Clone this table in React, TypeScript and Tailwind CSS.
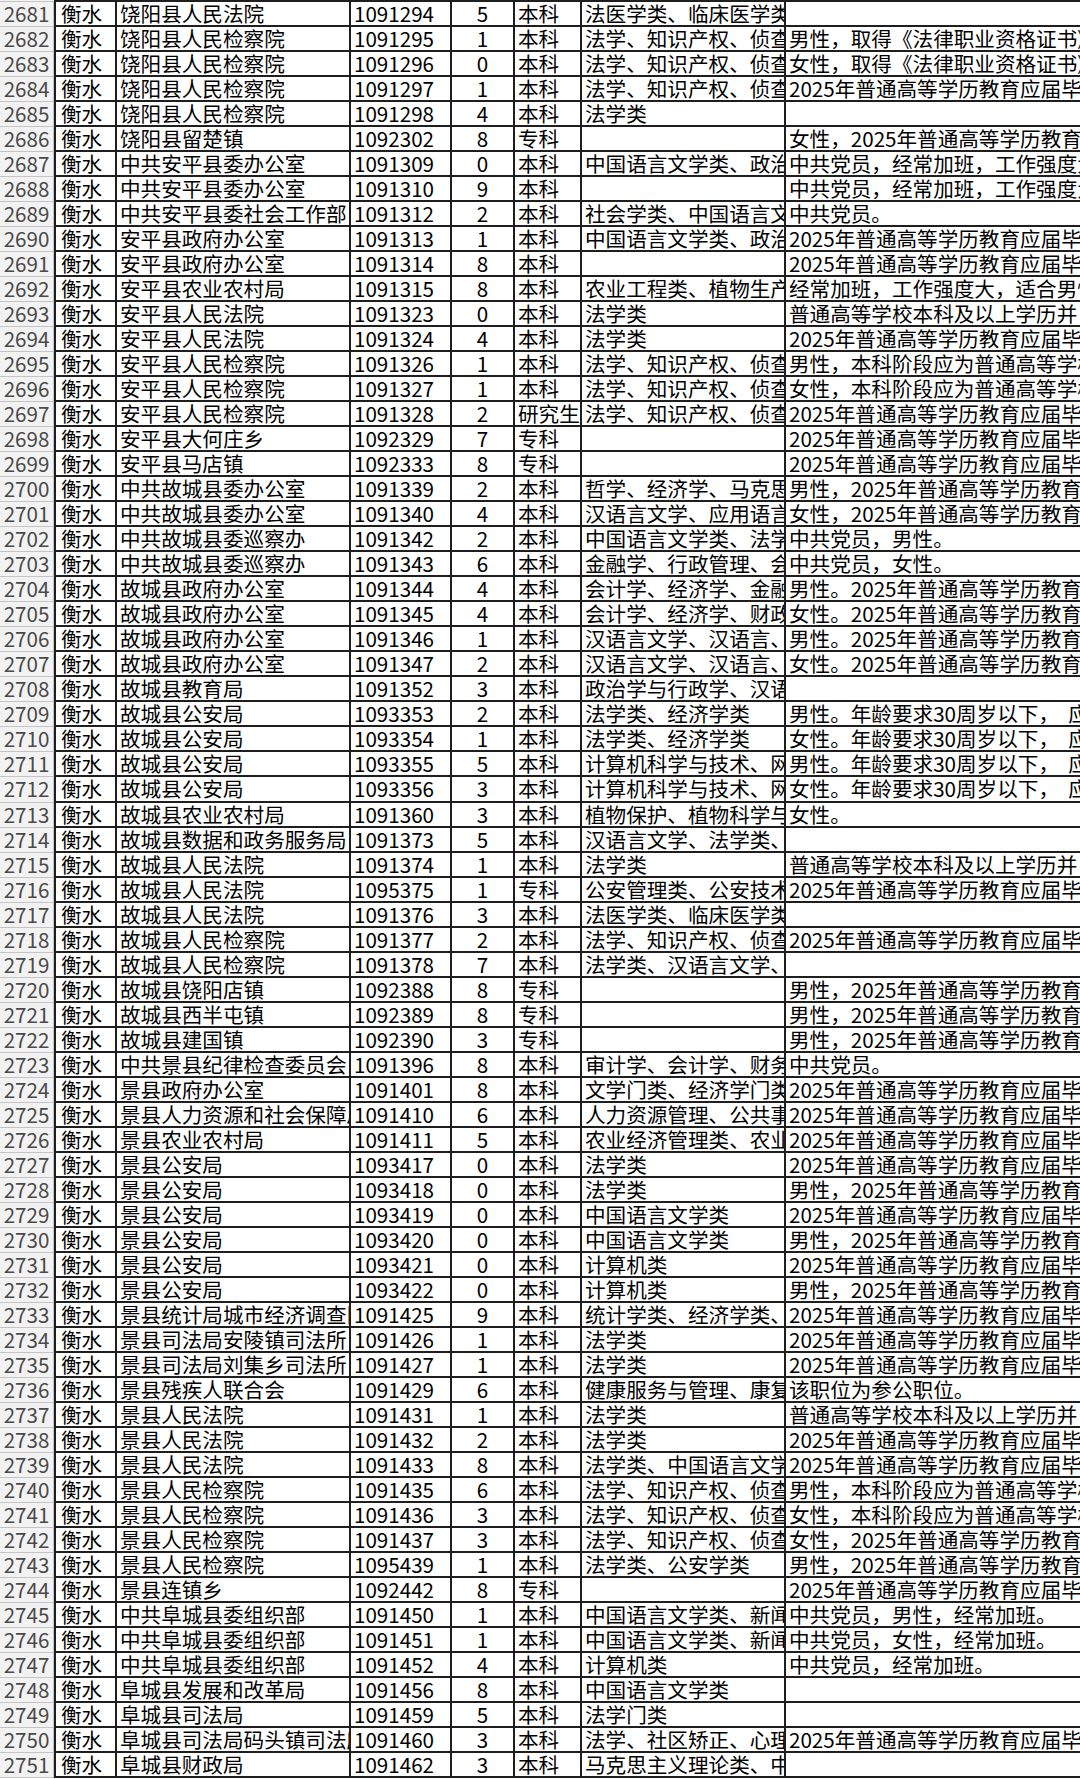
type Row = [number, string, string, string, string, string, string];

// [序号, 单位, 代码, 人数, 学历, 专业, 备注]
const rows: Row[] = [
  [2681, "饶阳县人民法院", "1091294", "5", "本科", "法医学类、临床医学类", ""],
  [2682, "饶阳县人民检察院", "1091295", "1", "本科", "法学、知识产权、侦查学", "男性，取得《法律职业资格证书》"],
  [2683, "饶阳县人民检察院", "1091296", "0", "本科", "法学、知识产权、侦查学", "女性，取得《法律职业资格证书》"],
  [2684, "饶阳县人民检察院", "1091297", "1", "本科", "法学、知识产权、侦查学", "2025年普通高等学历教育应届毕业生"],
  [2685, "饶阳县人民检察院", "1091298", "4", "本科", "法学类", ""],
  [2686, "饶阳县留楚镇", "1092302", "8", "专科", "", "女性，2025年普通高等学历教育应届毕业生"],
  [2687, "中共安平县委办公室", "1091309", "0", "本科", "中国语言文学类、政治学类", "中共党员，经常加班，工作强度大"],
  [2688, "中共安平县委办公室", "1091310", "9", "本科", "", "中共党员，经常加班，工作强度大"],
  [2689, "中共安平县委社会工作部", "1091312", "2", "本科", "社会学类、中国语言文学类", "中共党员。"],
  [2690, "安平县政府办公室", "1091313", "1", "本科", "中国语言文学类、政治学类", "2025年普通高等学历教育应届毕业生"],
  [2691, "安平县政府办公室", "1091314", "8", "本科", "", "2025年普通高等学历教育应届毕业生"],
  [2692, "安平县农业农村局", "1091315", "8", "本科", "农业工程类、植物生产类", "经常加班，工作强度大，适合男性"],
  [2693, "安平县人民法院", "1091323", "0", "本科", "法学类", "普通高等学校本科及以上学历并"],
  [2694, "安平县人民法院", "1091324", "4", "本科", "法学类", "2025年普通高等学历教育应届毕业生"],
  [2695, "安平县人民检察院", "1091326", "1", "本科", "法学、知识产权、侦查学", "男性，本科阶段应为普通高等学校"],
  [2696, "安平县人民检察院", "1091327", "1", "本科", "法学、知识产权、侦查学", "女性，本科阶段应为普通高等学校"],
  [2697, "安平县人民检察院", "1091328", "2", "研究生", "法学、知识产权、侦查学", "2025年普通高等学历教育应届毕业生"],
  [2698, "安平县大何庄乡", "1092329", "7", "专科", "", "2025年普通高等学历教育应届毕业生"],
  [2699, "安平县马店镇", "1092333", "8", "专科", "", "2025年普通高等学历教育应届毕业生"],
  [2700, "中共故城县委办公室", "1091339", "2", "本科", "哲学、经济学、马克思主义", "男性，2025年普通高等学历教育应届"],
  [2701, "中共故城县委办公室", "1091340", "4", "本科", "汉语言文学、应用语言学", "女性，2025年普通高等学历教育应届"],
  [2702, "中共故城县委巡察办", "1091342", "2", "本科", "中国语言文学类、法学类", "中共党员，男性。"],
  [2703, "中共故城县委巡察办", "1091343", "6", "本科", "金融学、行政管理、会计学", "中共党员，女性。"],
  [2704, "故城县政府办公室", "1091344", "4", "本科", "会计学、经济学、金融学", "男性。2025年普通高等学历教育应届"],
  [2705, "故城县政府办公室", "1091345", "4", "本科", "会计学、经济学、财政学", "女性。2025年普通高等学历教育应届"],
  [2706, "故城县政府办公室", "1091346", "1", "本科", "汉语言文学、汉语言、秘书学", "男性。2025年普通高等学历教育应届"],
  [2707, "故城县政府办公室", "1091347", "2", "本科", "汉语言文学、汉语言、秘书学", "女性。2025年普通高等学历教育应届"],
  [2708, "故城县教育局", "1091352", "3", "本科", "政治学与行政学、汉语言文学", ""],
  [2709, "故城县公安局", "1093353", "2", "本科", "法学类、经济学类", "男性。年龄要求30周岁以下，  应届"],
  [2710, "故城县公安局", "1093354", "1", "本科", "法学类、经济学类", "女性。年龄要求30周岁以下，  应届"],
  [2711, "故城县公安局", "1093355", "5", "本科", "计算机科学与技术、网络工程", "男性。年龄要求30周岁以下，  应届"],
  [2712, "故城县公安局", "1093356", "3", "本科", "计算机科学与技术、网络工程", "女性。年龄要求30周岁以下，  应届"],
  [2713, "故城县农业农村局", "1091360", "3", "本科", "植物保护、植物科学与技术", "女性。"],
  [2714, "故城县数据和政务服务局", "1091373", "5", "本科", "汉语言文学、法学类、", ""],
  [2715, "故城县人民法院", "1091374", "1", "本科", "法学类", "普通高等学校本科及以上学历并"],
  [2716, "故城县人民法院", "1095375", "1", "专科", "公安管理类、公安技术类", "2025年普通高等学历教育应届毕业生"],
  [2717, "故城县人民法院", "1091376", "3", "本科", "法医学类、临床医学类", ""],
  [2718, "故城县人民检察院", "1091377", "2", "本科", "法学、知识产权、侦查学", "2025年普通高等学历教育应届毕业生"],
  [2719, "故城县人民检察院", "1091378", "7", "本科", "法学类、汉语言文学、", ""],
  [2720, "故城县饶阳店镇", "1092388", "8", "专科", "", "男性，2025年普通高等学历教育应届"],
  [2721, "故城县西半屯镇", "1092389", "8", "专科", "", "男性，2025年普通高等学历教育应届"],
  [2722, "故城县建国镇", "1092390", "3", "专科", "", "男性，2025年普通高等学历教育应届"],
  [2723, "中共景县纪律检查委员会", "1091396", "8", "本科", "审计学、会计学、财务管理", "中共党员。"],
  [2724, "景县政府办公室", "1091401", "8", "本科", "文学门类、经济学门类", "2025年普通高等学历教育应届毕业生"],
  [2725, "景县人力资源和社会保障局", "1091410", "6", "本科", "人力资源管理、公共事业管理", "2025年普通高等学历教育应届毕业生"],
  [2726, "景县农业农村局", "1091411", "5", "本科", "农业经济管理类、农业工程类", "2025年普通高等学历教育应届毕业生"],
  [2727, "景县公安局", "1093417", "0", "本科", "法学类", "2025年普通高等学历教育应届毕业生"],
  [2728, "景县公安局", "1093418", "0", "本科", "法学类", "男性，2025年普通高等学历教育应届"],
  [2729, "景县公安局", "1093419", "0", "本科", "中国语言文学类", "2025年普通高等学历教育应届毕业生"],
  [2730, "景县公安局", "1093420", "0", "本科", "中国语言文学类", "男性，2025年普通高等学历教育应届"],
  [2731, "景县公安局", "1093421", "0", "本科", "计算机类", "2025年普通高等学历教育应届毕业生"],
  [2732, "景县公安局", "1093422", "0", "本科", "计算机类", "男性，2025年普通高等学历教育应届"],
  [2733, "景县统计局城市经济调查队", "1091425", "9", "本科", "统计学类、经济学类、", "2025年普通高等学历教育应届毕业生"],
  [2734, "景县司法局安陵镇司法所", "1091426", "1", "本科", "法学类", "2025年普通高等学历教育应届毕业生"],
  [2735, "景县司法局刘集乡司法所", "1091427", "1", "本科", "法学类", "2025年普通高等学历教育应届毕业生"],
  [2736, "景县残疾人联合会", "1091429", "6", "本科", "健康服务与管理、康复治疗学", "该职位为参公职位。"],
  [2737, "景县人民法院", "1091431", "1", "本科", "法学类", "普通高等学校本科及以上学历并"],
  [2738, "景县人民法院", "1091432", "2", "本科", "法学类", "2025年普通高等学历教育应届毕业生"],
  [2739, "景县人民法院", "1091433", "8", "本科", "法学类、中国语言文学类", "2025年普通高等学历教育应届毕业生"],
  [2740, "景县人民检察院", "1091435", "6", "本科", "法学、知识产权、侦查学", "男性，本科阶段应为普通高等学校"],
  [2741, "景县人民检察院", "1091436", "3", "本科", "法学、知识产权、侦查学", "女性，本科阶段应为普通高等学校"],
  [2742, "景县人民检察院", "1091437", "3", "本科", "法学、知识产权、侦查学", "女性，2025年普通高等学历教育应届"],
  [2743, "景县人民检察院", "1095439", "1", "本科", "法学类、公安学类", "男性，2025年普通高等学历教育应届"],
  [2744, "景县连镇乡", "1092442", "8", "专科", "", "2025年普通高等学历教育应届毕业生"],
  [2745, "中共阜城县委组织部", "1091450", "1", "本科", "中国语言文学类、新闻传播学类", "中共党员，男性，经常加班。"],
  [2746, "中共阜城县委组织部", "1091451", "1", "本科", "中国语言文学类、新闻传播学类", "中共党员，女性，经常加班。"],
  [2747, "中共阜城县委组织部", "1091452", "4", "本科", "计算机类", "中共党员，经常加班。"],
  [2748, "阜城县发展和改革局", "1091456", "8", "本科", "中国语言文学类", ""],
  [2749, "阜城县司法局", "1091459", "5", "本科", "法学门类", ""],
  [2750, "阜城县司法局码头镇司法所", "1091460", "3", "本科", "法学、社区矫正、心理学", "2025年普通高等学历教育应届毕业生"],
  [2751, "阜城县财政局", "1091462", "3", "本科", "马克思主义理论类、中国语言文学类", ""],
];

const cell =
  "h-full overflow-hidden whitespace-nowrap border-l-2 border-b-2 border-[#1e1e1e] px-[3px]";

const App = () => {
  return (
    <div
      className="w-[1080px] h-[1779px] overflow-hidden bg-white text-black text-[20.6px] leading-[23px]"
      style={{ fontFamily: '"Noto Sans CJK SC", "Noto Sans", sans-serif' }}
    >
      <div className="grid grid-cols-[54px_61px_234px_101px_63px_67px_204px_1fr] h-[2px]">
        <div className="border-b border-[#c4c4c4] bg-[#f2f2f2]" />
        <div className="col-span-7 bg-[#1e1e1e]" />
      </div>
      {rows.map(([no, unit, code, count, edu, major, note]) => (
        <div
          key={no}
          className="grid grid-cols-[54px_61px_234px_101px_63px_67px_204px_1fr] h-[25.03px]"
        >
          <div className="h-full overflow-hidden whitespace-nowrap border-b border-r border-[#c4c4c4] bg-[#f2f2f2] text-center text-[#4a4a4a]">
            {no}
          </div>
          <div className={cell + " pl-[5px]"}>衡水</div>
          <div className={cell}>{unit}</div>
          <div className={cell}>{code}</div>
          <div className={cell + " text-center"}>{count}</div>
          <div className={cell}>{edu}</div>
          <div className={cell}>{major}</div>
          <div className={cell + " whitespace-pre"}>{note}</div>
        </div>
      ))}
    </div>
  );
};

export default App;
